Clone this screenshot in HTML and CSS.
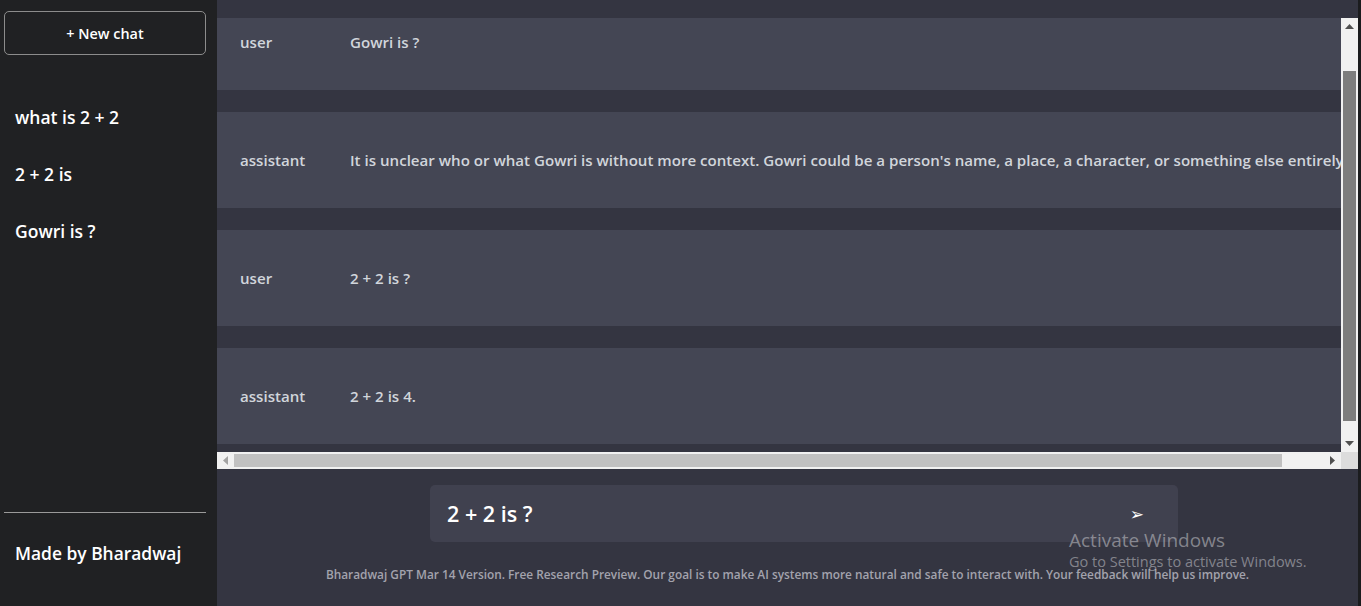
FILE: index.html
```html
<!DOCTYPE html>
<html lang="en">
<head>
<meta charset="utf-8">
<title>Bharadwaj GPT</title>
<link rel="stylesheet" href="styles.css">
</head>
<body>
<aside class="sidebar">
  <button class="new-chat">+ New chat</button>
  <ul class="history">
    <li>what is 2 + 2</li>
    <li>2 + 2 is</li>
    <li>Gowri is ?</li>
  </ul>
  <div class="sidebar-footer">
    <div class="made-by">Made by Bharadwaj</div>
  </div>
</aside>
<main class="main">
  <div class="chat-area">
    <div class="chat-row">
      <div class="chat-viewport" id="chat">
        <div class="chat-content">
          <div class="msg"><span class="role">user</span><span class="text">Gowri is ?</span></div>
          <div class="msg"><span class="role">assistant</span><span class="text">It is unclear who or what Gowri is without more context. Gowri could be a person's name, a place, a character, or something else entirely.</span></div>
          <div class="msg"><span class="role">user</span><span class="text">2 + 2 is ?</span></div>
          <div class="msg"><span class="role">assistant</span><span class="text">2 + 2 is 4.</span></div>
        </div>
      </div>
      <div class="vbar">
        <div class="arrow-btn"><svg width="9" height="5" viewBox="0 0 9 5"><path d="M0 5 L4.5 0 L9 5 Z" fill="#505050"/></svg></div>
        <div class="vtrack"><div class="vthumb"></div></div>
        <div class="arrow-btn"><svg width="9" height="5" viewBox="0 0 9 5"><path d="M0 0 L4.5 5 L9 0 Z" fill="#505050"/></svg></div>
      </div>
    </div>
    <div class="hbar-row">
      <div class="hbar">
        <div class="arrow-btn"><svg width="5" height="9" viewBox="0 0 5 9"><path d="M5 0 L0 4.5 L5 9 Z" fill="#a3a3a3"/></svg></div>
        <div class="htrack"><div class="hthumb"></div></div>
        <div class="arrow-btn"><svg width="5" height="9" viewBox="0 0 5 9"><path d="M0 0 L5 4.5 L0 9 Z" fill="#505050"/></svg></div>
      </div>
      <div class="corner"></div>
    </div>
  </div>
  <div class="bottom">
    <div class="input-wrap">
      <div class="input-box">
        <span class="input-text">2 + 2 is ?</span>
        <span class="send">➢</span>
      </div>
    </div>
    <p class="info">Bharadwaj GPT Mar 14 Version. Free Research Preview. Our goal is to make AI systems more natural and safe to interact with. Your feedback will help us improve.</p>
  </div>
</main>
<div class="edge"></div>
<div class="watermark">
  <div class="wm-title">Activate Windows</div>
  <div class="wm-sub">Go to Settings to activate Windows.</div>
</div>
<script src="script.js"></script>
</body>
</html>
```
FILE: styles.css
```css
* { box-sizing: border-box; }
html, body { margin: 0; padding: 0; height: 100%; }
body {
  display: flex;
  height: 606px;
  overflow: hidden;
  background: #202123;
  font-family: "Open Sans", "Noto Sans", sans-serif;
  color: #fff;
}
.sidebar {
  width: 217px;
  flex: none;
  background: #202123;
  display: flex;
  flex-direction: column;
  padding: 11px 11px 0 4px;
}
.new-chat {
  height: 44px;
  width: 202px;
  background: transparent;
  border: 1px solid #8c8c8c;
  border-radius: 5px;
  color: #fff;
  font-family: "Open Sans", sans-serif;
  font-size: 14.4px;
  font-weight: 600;
}
.history {
  list-style: none;
  margin: 33px 0 0;
  padding: 0;
  flex: 1;
}
.history li {
  height: 57px;
  display: flex;
  align-items: center;
  padding-left: 11px;
  font-size: 17.5px;
  font-weight: 600;
}
.sidebar-footer {
  border-top: 1px solid #9a9a9a;
  width: 202px;
  padding: 28px 11px 41px;
}
.made-by { font-size: 17.4px; font-weight: 600; line-height: 24px; }
.main {
  flex: 1;
  min-width: 0;
  background: #343541;
  display: flex;
  flex-direction: column;
  padding-top: 18px;
}
.edge { width: 3px; flex: none; background: #1b1c1e; }
.chat-area { display: flex; flex-direction: column; flex: none; }
.chat-row { display: flex; height: 434px; }
.chat-viewport {
  flex: 1;
  min-width: 0;
  overflow: hidden;
}
.chat-content { padding-bottom: 22px; }
.msg {
  height: 96px;
  margin-top: 22px;
  display: flex;
  align-items: center;
  background: #444654;
  white-space: nowrap;
  color: #d1d5db;
  font-size: 15.1px;
  font-weight: 600;
}
.role { width: 133px; flex: none; padding-left: 23px; }
.text { flex: none; padding-right: 30px; }
.vbar {
  width: 17px;
  flex: none;
  background: #f1f1f1;
  display: flex;
  flex-direction: column;
}
.arrow-btn {
  width: 17px;
  height: 17px;
  flex: none;
  display: flex;
  align-items: center;
  justify-content: center;
}
.vtrack { flex: 1; padding: 36px 2px 14px; display: flex; }
.vthumb { flex: 1; background: #7d7d7d; }
.hbar-row { display: flex; height: 17px; }
.hbar { flex: 1; display: flex; background: #f1f1f1; }
.htrack { flex: 1; padding: 2px 42px 2px 0; display: flex; }
.hthumb { flex: 1; background: #c1c1c1; }
.corner { width: 17px; flex: none; background: #dcdcdc; }
.bottom {
  flex: 1;
  display: flex;
  flex-direction: column;
}
.input-wrap { padding: 16px 0 0 213px; }
.input-box {
  width: 748px;
  height: 57px;
  background: #40414f;
  border-radius: 5px;
  display: flex;
  align-items: center;
  justify-content: space-between;
  padding: 0 34px 0 17px;
}
.input-text { font-size: 21.5px; font-weight: 600; color: #fff; }
.send { font-family: "DejaVu Sans", sans-serif; font-size: 17px; color: #fff; }
.info {
  margin: 24px 0 0;
  text-align: center;
  font-size: 11.85px;
  font-weight: 600;
  color: #a3a3ad;
}
.watermark {
  position: absolute;
  left: 1069px;
  top: 528px;
  color: rgba(200, 200, 205, 0.55);
  font-family: "Open Sans", sans-serif;
  font-weight: 400;
  pointer-events: none;
}
.wm-title { font-size: 19px; line-height: 24px; }
.wm-sub { font-size: 14.5px; line-height: 20px; }
```
FILE: script.js
```js
document.getElementById('chat').scrollTop = 46;
```
